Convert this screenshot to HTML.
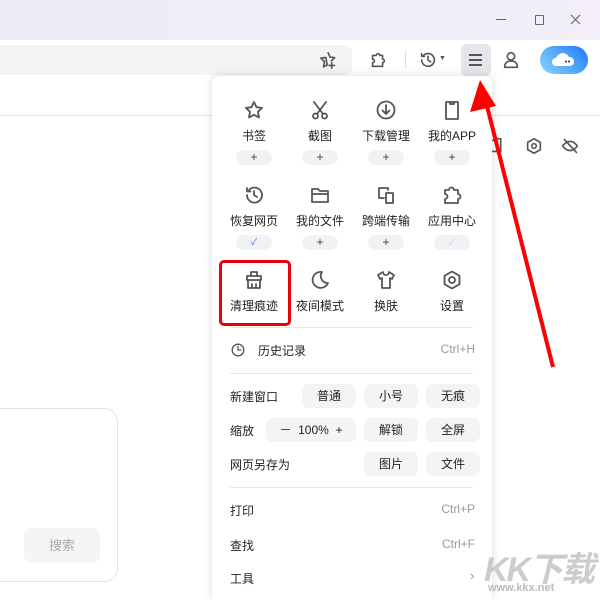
<html style="overflow:hidden"><head><style>
html,body{margin:0;width:600px;height:600px;overflow:hidden}
body{background:#fff;font-family:"Liberation Sans","Noto Sans CJK SC",sans-serif;position:relative}
.a{position:absolute}
.lbl{position:absolute;font-size:12px;color:#222;width:66px;text-align:center}
.pill{position:absolute;width:36px;height:15px;border-radius:8px;background:#f1f2f6;color:#444;font-size:12px;line-height:15px;text-align:center}
.btn{position:absolute;height:24px;border-radius:7px;background:#f4f4f6;font-size:12px;line-height:24px;text-align:center;color:#222}
.row{position:absolute;left:230px;font-size:12px;color:#222}
.sc{position:absolute;right:125px;font-size:12px;color:#999}
.sep{position:absolute;left:230px;width:243px;height:1px;background:#e8e8ea}
svg.i{position:absolute;width:22px;height:22px;fill:none;stroke:#555;stroke-width:1.8;stroke-linejoin:round;stroke-linecap:round}
</style></head><body>
<div class="a" style="left:0;top:0;width:600px;height:40px;background:linear-gradient(90deg,#ececf8,#f3eef8)"></div>
<div class="a" style="left:496px;top:19px;width:10px;height:1px;background:#666"></div>
<div class="a" style="left:535px;top:15px;width:7px;height:8px;border:1px solid #666;border-radius:1px"></div>
<svg class="a" style="left:570px;top:14px" width="11" height="11"><path d="M1 1l9 9M10 1l-9 9" stroke="#666" stroke-width="1.1"/></svg>
<div class="a" style="left:0;top:45px;width:352px;height:30px;background:#f4f4f6;border-radius:0 8px 8px 0"></div>
<svg class="i" style="left:319px;top:50px;width:20px;height:20px" viewBox="0 0 22 22"><path d="M10 3l2.3 4.8 5 .6-3.6 3.5M9 16.5L5 18.4l1-5.6-4-3.9 5.5-.7zM14 14v6M11 17h6"/></svg>
<svg class="i" style="left:368px;top:50px;width:20px;height:20px" viewBox="0 0 22 22"><path d="M5 6h4a2 2 0 1 1 4 0h3v4a2 2 0 1 1 0 4v4H5v-4a2 2 0 1 0 0-4z"/></svg>
<div class="a" style="left:405px;top:51px;width:1px;height:17px;background:#ddd"></div>
<svg class="i" style="left:418px;top:50px;width:20px;height:20px" viewBox="0 0 22 22"><path d="M4 11a7 7 0 1 0 2-5M4 4v3h3M11 7v4l3 2"/></svg>
<div class="a" style="left:439px;top:55px;font-size:7px;color:#555">▼</div>
<div class="a" style="left:461px;top:44px;width:30px;height:32px;background:#e6e6ea;border-radius:6px"></div>
<div class="a" style="left:469px;top:54px;width:13px;height:1.5px;background:#555;box-shadow:0 5px 0 #555,0 10px 0 #555"></div>
<svg class="i" style="left:501px;top:50px;width:20px;height:20px" viewBox="0 0 22 22"><circle cx="11" cy="7" r="4"/><path d="M4 19c0-5 3-7 7-7s7 2 7 7z"/></svg>
<div class="a" style="left:540px;top:46px;width:48px;height:28px;border-radius:14px;background:linear-gradient(45deg,#8cd4ff,#1b7df4)"></div>
<svg class="a" style="left:550px;top:52px" width="28" height="16"><path d="M6 14a4 4 0 0 1 0-8 7 7 0 0 1 13-1 4.5 4.5 0 0 1 1 9z" fill="#fff"/><circle cx="16" cy="9.5" r="1" fill="#222"/><circle cx="19" cy="9.5" r="1" fill="#222"/></svg>
<div class="a" style="left:0;top:115px;width:600px;height:1px;background:#e4e4e6"></div>
<div class="a" style="left:-20px;top:408px;width:136px;height:172px;border:1px solid #e2e2ea;border-radius:14px"></div>
<div class="a" style="left:24px;top:528px;width:76px;height:35px;background:#f5f5f7;border-radius:8px;font-size:13px;color:#aaa;text-align:center;line-height:35px">搜索</div>
<svg class="i" style="left:524px;top:136px;width:20px;height:20px" viewBox="0 0 22 22"><path d="M11 3l7 4v8l-7 4-7-4V7z"/><circle cx="11" cy="11" r="2.5"/></svg>
<svg class="i" style="left:560px;top:136px;width:20px;height:20px" viewBox="0 0 22 22"><path d="M3 11s3-5 8-5 8 5 8 5-3 5-8 5-8-5-8-5zM5 4l13 14"/></svg>
<svg class="i" style="left:490px;top:136px;width:16px;height:20px" viewBox="0 0 16 22"><path d="M2 5l5-2h4v14H2"/></svg>
<div class="a" style="left:212px;top:76px;width:280px;height:524px;background:#fff;border-radius:8px 8px 0 0;box-shadow:0 0 10px rgba(0,0,0,.15)"></div>
<svg class="i" style="left:243px;top:99px" viewBox="0 0 22 22"><path d="M11 3l2.5 5.2 5.5.7-4 3.9 1 5.6L11 15.8 6 18.4l1-5.6-4-3.9 5.5-.7z"/></svg>
<svg class="i" style="left:309px;top:99px" viewBox="0 0 22 22"><path d="M5 3l9 12M17 3L8 15"/><circle cx="6.5" cy="17" r="2.5"/><circle cx="15.5" cy="17" r="2.5"/></svg>
<svg class="i" style="left:375px;top:99px" viewBox="0 0 22 22"><circle cx="11" cy="11" r="8.5"/><path d="M11 6v9M7.5 11.5L11 15l3.5-3.5"/></svg>
<svg class="i" style="left:441px;top:99px" viewBox="0 0 22 22"><rect x="5" y="3" width="12" height="17"/><path d="M9 3v2h4V3"/></svg>
<div class="lbl" style="left:221px;top:127px">书签</div><div class="lbl" style="left:287px;top:127px">截图</div><div class="lbl" style="left:353px;top:127px">下载管理</div><div class="lbl" style="left:419px;top:127px">我的APP</div>
<div class="pill" style="left:236px;top:150px">+</div><div class="pill" style="left:302px;top:150px">+</div><div class="pill" style="left:368px;top:150px">+</div><div class="pill" style="left:434px;top:150px">+</div>
<svg class="i" style="left:243px;top:184px" viewBox="0 0 22 22"><path d="M4 11a7.5 7.5 0 1 0 2-5M4 4v3.5h3.5M11 7v4l3 2"/></svg>
<svg class="i" style="left:309px;top:184px" viewBox="0 0 22 22"><path d="M3 5h6l2 2h8v11H3zM3 10h16"/></svg>
<svg class="i" style="left:375px;top:184px" viewBox="0 0 22 22"><path d="M13 6V4H4v10h5"/><rect x="11" y="9" width="7" height="10"/></svg>
<svg class="i" style="left:441px;top:184px" viewBox="0 0 22 22"><path d="M4 6h4a2.5 2.5 0 1 1 5 0h4v4a2.5 2.5 0 1 1 0 5v4H4v-4a2.5 2.5 0 1 0 0-5z"/></svg>
<div class="lbl" style="left:221px;top:212px">恢复网页</div><div class="lbl" style="left:287px;top:212px">我的文件</div><div class="lbl" style="left:353px;top:212px">跨端传输</div><div class="lbl" style="left:419px;top:212px">应用中心</div>
<div class="pill" style="left:236px;top:235px;color:#3b6fe0;font-size:9px">✓</div><div class="pill" style="left:302px;top:235px">+</div><div class="pill" style="left:368px;top:235px">+</div><div class="pill" style="left:434px;top:235px;color:#c8d4f0;font-size:9px">✓</div>
<svg class="i" style="left:243px;top:269px" viewBox="0 0 22 22"><path d="M8 7V3h6v4M4 7h14v4H4zM5 11v8h12v-8M9 15v4M13 15v4"/></svg>
<svg class="i" style="left:309px;top:269px" viewBox="0 0 22 22"><path d="M13 3a8 8 0 1 0 6 11A7 7 0 0 1 13 3z"/></svg>
<svg class="i" style="left:375px;top:269px" viewBox="0 0 22 22"><path d="M8 3L3 6l2 4 2-1v10h8V9l2 1 2-4-5-3c0 2-1.5 3-3 3S8 5 8 3z"/></svg>
<svg class="i" style="left:441px;top:269px" viewBox="0 0 22 22"><path d="M11 2.5l7.5 4.3v8.4L11 19.5l-7.5-4.3V6.8z"/><circle cx="11" cy="11" r="3"/></svg>
<div class="lbl" style="left:221px;top:297px">清理痕迹</div><div class="lbl" style="left:287px;top:297px">夜间模式</div><div class="lbl" style="left:353px;top:297px">换肤</div><div class="lbl" style="left:419px;top:297px">设置</div>
<div class="a" style="left:219px;top:260px;width:66px;height:60px;border:3px solid #e8000b;border-radius:5px"></div>
<div class="sep" style="top:327px"></div>
<svg class="i" style="left:230px;top:342px;width:16px;height:16px" viewBox="0 0 22 22"><circle cx="11" cy="11" r="8"/><path d="M11 6v5h4"/></svg>
<div class="row" style="left:258px;top:342px">历史记录</div><div class="sc" style="top:342px">Ctrl+H</div>
<div class="sep" style="top:373px"></div>
<div class="row" style="top:388px">新建窗口</div>
<div class="btn" style="left:302px;top:384px;width:54px">普通</div><div class="btn" style="left:364px;top:384px;width:54px">小号</div><div class="btn" style="left:426px;top:384px;width:54px">无痕</div>
<div class="row" style="top:422px">缩放</div>
<div class="btn" style="left:266px;top:418px;width:90px">－&nbsp;&nbsp;100%&nbsp;&nbsp;+</div>
<div class="btn" style="left:364px;top:418px;width:54px">解锁</div><div class="btn" style="left:426px;top:418px;width:54px">全屏</div>
<div class="row" style="top:456px">网页另存为</div>
<div class="btn" style="left:364px;top:452px;width:54px">图片</div><div class="btn" style="left:426px;top:452px;width:54px">文件</div>
<div class="sep" style="top:487px"></div>
<div class="row" style="top:502px">打印</div><div class="sc" style="top:502px">Ctrl+P</div>
<div class="row" style="top:537px">查找</div><div class="sc" style="top:537px">Ctrl+F</div>
<div class="row" style="top:570px">工具</div><div class="a" style="left:470px;top:568px;font-size:13px;color:#999">›</div>
<div class="a" style="left:484px;top:542px;font-size:34px;font-weight:bold;color:#ccc;font-style:italic;white-space:nowrap;letter-spacing:-2px">KK下载</div>
<div class="a" style="left:488px;top:582px;font-size:11px;color:#bbb;font-weight:bold;white-space:nowrap">www.kkx.net</div>
<svg class="a" style="left:0;top:0" width="600" height="600"><line x1="553" y1="367" x2="487" y2="106" stroke="#f00" stroke-width="4"/><path d="M480 80L470 112L496 106z" fill="#f00"/></svg>
</body></html>
